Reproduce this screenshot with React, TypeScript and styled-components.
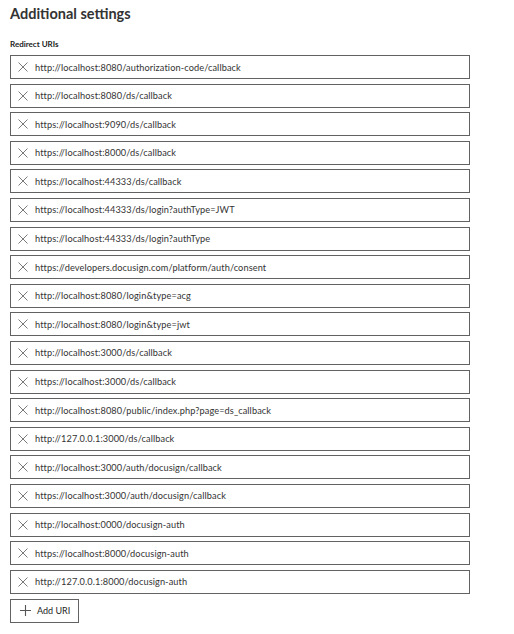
import React from "react";
import styled, { createGlobalStyle } from "styled-components";

const Global = createGlobalStyle`
  html, body { margin: 0; padding: 0; background: #fff; }
  body { font-family: Lato, "Noto Sans", sans-serif; color: #2b2b2b; }
`;

const Page = styled.div`
  padding: 5px 10px 10px 10px;
  width: 460px;
`;

const Title = styled.h2`
  margin: 0;
  font-size: 14.5px;
  line-height: 18px;
  font-weight: 700;
  color: #333;
`;

const Label = styled.div`
  margin-top: 16px;
  font-size: 8px;
  line-height: 10px;
  font-weight: 700;
  color: #222;
`;

const List = styled.div`
  margin-top: 6px;
  display: flex;
  flex-direction: column;
  gap: 4.6px;
`;

const Row = styled.div`
  box-sizing: border-box;
  height: 24px;
  width: 460px;
  border: 1px solid #626262;
  display: flex;
  align-items: center;
  padding-left: 7px;
  gap: 7px;
`;

const IconBtn = styled.span`
  display: flex;
  width: 10px;
  height: 10px;
  color: #7a7a7a;
`;

const Url = styled.span`
  font-size: 9.2px;
  letter-spacing: 0.1px;
  color: #333;
  white-space: nowrap;
`;

const AddButton = styled.button`
  margin-top: 5px;
  box-sizing: border-box;
  height: 24px;
  width: 69px;
  border: 1px solid #626262;
  background: #fff;
  display: flex;
  align-items: center;
  padding: 0 0 0 9px;
  gap: 6px;
  font-family: inherit;
  font-size: 9px;
  color: #222;
`;

const urls = [
  "http://localhost:8080/authorization-code/callback",
  "http://localhost:8080/ds/callback",
  "https://localhost:9090/ds/callback",
  "https://localhost:8000/ds/callback",
  "https://localhost:44333/ds/callback",
  "https://localhost:44333/ds/login?authType=JWT",
  "https://localhost:44333/ds/login?authType",
  "https://developers.docusign.com/platform/auth/consent",
  "http://localhost:8080/login&type=acg",
  "http://localhost:8080/login&type=jwt",
  "http://localhost:3000/ds/callback",
  "https://localhost:3000/ds/callback",
  "http://localhost:8080/public/index.php?page=ds_callback",
  "http://127.0.0.1:3000/ds/callback",
  "http://localhost:3000/auth/docusign/callback",
  "https://localhost:3000/auth/docusign/callback",
  "http://localhost:0000/docusign-auth",
  "https://localhost:8000/docusign-auth",
  "http://127.0.0.1:8000/docusign-auth",
];

const XIcon = () => (
  <svg width="10" height="10" viewBox="0 0 10 10" fill="none" stroke="currentColor" strokeWidth="1">
    <path d="M0.5 0.5 L9.5 9.5 M9.5 0.5 L0.5 9.5" />
  </svg>
);

const PlusIcon = () => (
  <svg width="11" height="11" viewBox="0 0 11 11" fill="none" stroke="#555" strokeWidth="1.1">
    <path d="M5.5 0 V11 M0 5.5 H11" />
  </svg>
);

export default function App() {
  return (
    <Page>
      <Global />
      <Title>Additional settings</Title>
      <Label>Redirect URIs</Label>
      <List>
        {urls.map((u, i) => (
          <Row key={i}>
            <IconBtn>
              <XIcon />
            </IconBtn>
            <Url>{u}</Url>
          </Row>
        ))}
      </List>
      <AddButton>
        <PlusIcon />
        Add URI
      </AddButton>
    </Page>
  );
}
